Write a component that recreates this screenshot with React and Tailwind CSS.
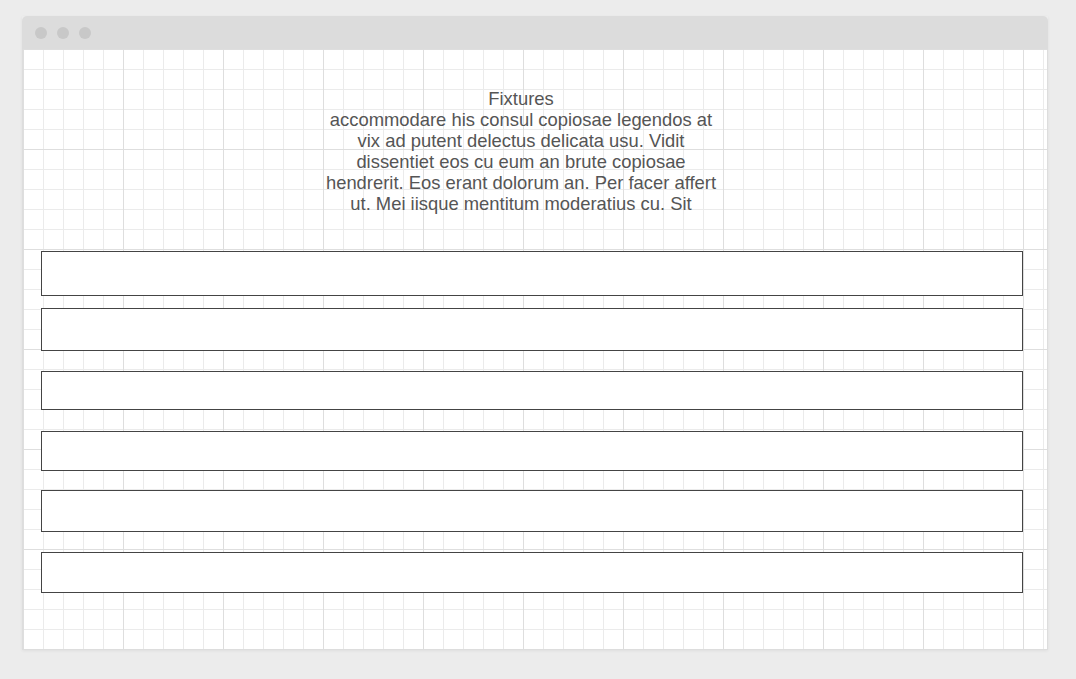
import React from 'react';

const boxes = [
  { h: 'h-[45px]', mt: 'mt-0' },
  { h: 'h-[43px]', mt: 'mt-[12px]' },
  { h: 'h-[39px]', mt: 'mt-[20px]' },
  { h: 'h-[40px]', mt: 'mt-[21px]' },
  { h: 'h-[42px]', mt: 'mt-[19px]' },
  { h: 'h-[41px]', mt: 'mt-[20px]' },
];

const App = () => {
  return (
    <div className="w-[1076px] h-[679px] bg-[#ececec] pt-[16px] pl-[22px] font-['Liberation_Sans',Arial,sans-serif]">
      <div className="w-[1026px] shadow-[0_1px_3px_rgba(0,0,0,0.06)]">
        {/* title bar */}
        <div className="h-[33px] bg-[#dcdcdc] rounded-t-[5px] flex items-center gap-[10px] pl-[13px]">
          <span className="w-[12px] h-[12px] rounded-full bg-[#c8c8c8]"></span>
          <span className="w-[12px] h-[12px] rounded-full bg-[#c8c8c8]"></span>
          <span className="w-[12px] h-[12px] rounded-full bg-[#c8c8c8]"></span>
        </div>

        {/* grid canvas */}
        <div className="h-[601px] bg-white border-x border-b border-[#dddddd] [background-image:linear-gradient(to_right,#dedede_1px,transparent_1px),linear-gradient(to_bottom,#dedede_1px,transparent_1px),linear-gradient(to_right,#ebebeb_1px,transparent_1px),linear-gradient(to_bottom,#ebebeb_1px,transparent_1px)] [background-size:100px_100px,100px_100px,20px_20px,20px_20px]">
          <div className="pt-[39px] pl-[298px]">
            <p className="w-[400px] text-center text-[18.4px] leading-[21px] text-[#555555]">
              Fixtures
              <br />
              accommodare his consul copiosae legendos at vix ad putent delectus delicata usu. Vidit dissentiet eos cu eum an brute copiosae hendrerit. Eos erant dolorum an. Per facer affert ut. Mei iisque mentitum moderatius cu. Sit
            </p>
          </div>

          <div className="mt-[37px] pl-[18px] flex flex-col">
            {boxes.map((b, i) => (
              <div key={i} className={`w-[982px] ${b.h} ${b.mt} bg-white border border-[#444444]`}></div>
            ))}
          </div>
        </div>
      </div>
    </div>
  );
};

export default App;
